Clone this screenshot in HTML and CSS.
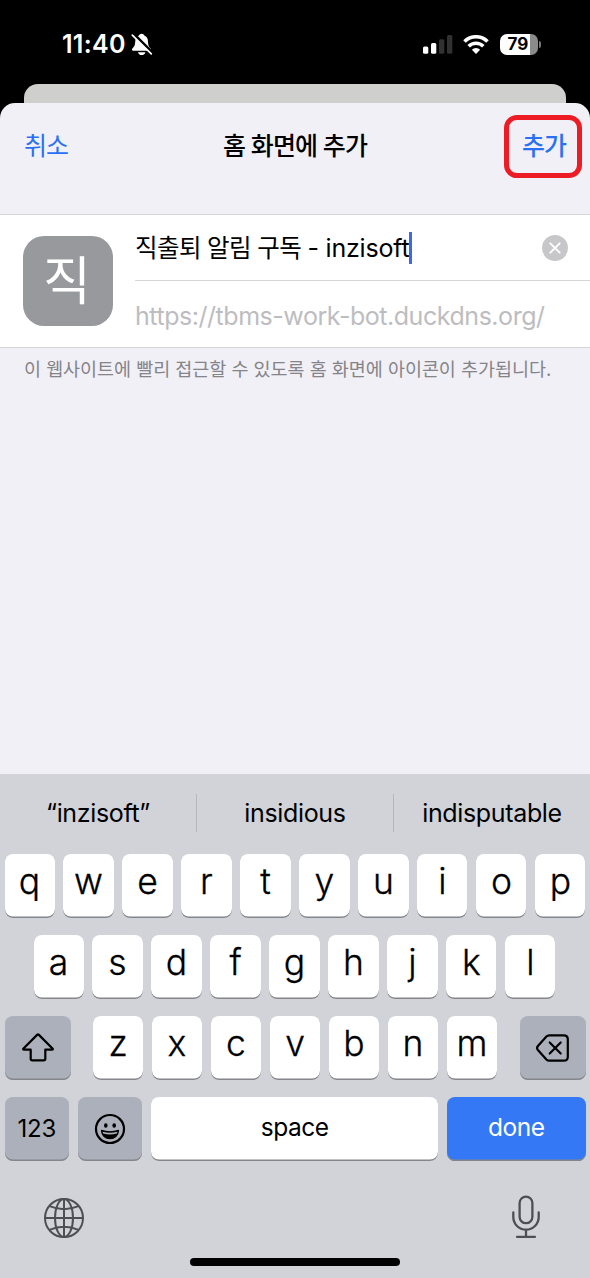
FILE: index.html
```html
<!DOCTYPE html>
<html lang="ko">
<head>
<meta charset="utf-8">
<title>홈 화면에 추가</title>
<link rel="stylesheet" href="styles.css">
</head>
<body>
<div class="phone">
  <header class="status">
    <div class="status-left">
      <span class="clock">11:40</span>
      <svg class="bell" width="22" height="24" viewBox="0 0 22 24">
        <path d="M10.700 .8C12 .8 12.900 1.500 13.300 2.600c2.600 1 3.600 3.200 3.700 6.100.1 3.500.8 4.900 2.600 6.800.9 1 .4 2.300-.9 2.300H2.300C1 17.800.5 16.500 1.400 15.500 3.300 13.500 4.100 12.100 4.200 8.700 4.300 5.800 5.500 3.600 8 2.600c.4-1.100 1.400-1.800 2.700-1.800z" fill="#fff"/>
        <path d="M7 19.200h7.400c-.4 1.700-1.800 2.900-3.700 2.900S7.400 20.900 7 19.200z" fill="#fff"/>
        <path d="M2.200 .8l18.800 18.800" stroke="#000" stroke-width="3.400"/>
        <path d="M1.300 2.100l19 18.800" stroke="#fff" stroke-width="1.700" stroke-linecap="round"/>
      </svg>
    </div>
    <div class="status-right">
      <svg width="30" height="19" viewBox="0 0 30 19">
        <rect x="0" y="11.500" width="5.300" height="7.200" rx="1.500" fill="#fff"/>
        <rect x="8" y="8" width="5.300" height="10.700" rx="1.500" fill="#fff"/>
        <rect x="16" y="4.200" width="5.300" height="14.500" rx="1.500" fill="#31322f"/>
        <rect x="24" y="0" width="5.300" height="18.700" rx="1.500" fill="#31322f"/>
      </svg>
      <svg class="wifi" width="26" height="19" viewBox="0 0 26 19" fill="none" stroke="#fff" stroke-width="3.600">
        <path d="M1.500 6.500a16.300 16.300 0 0 1 23 0"/>
        <path d="M5.700 11.200a10.400 10.400 0 0 1 14.600 0"/>
        <path d="M13 18.900L8.900 14.700a5.800 5.800 0 0 1 8.200 0z" fill="#fff" stroke="none"/>
      </svg>
      <div class="battery"><span class="battery-body">79</span><i class="battery-tip"></i></div>
    </div>
  </header>
  <div class="back-sheet"></div>
  <main class="sheet">
    <nav class="nav">
      <span class="nav-cancel">취소</span>
      <span class="nav-title">홈 화면에 추가</span>
      <span class="nav-add">추가<i class="highlight"></i></span>
    </nav>
    <section class="card">
      <div class="app-icon">직</div>
      <div class="fields">
        <div class="field name-field">
          <span class="name">직출퇴 알림 구독 <span class="latin">- inzisoft</span></span><i class="caret"></i>
          <svg class="clear" width="26" height="26" viewBox="0 0 26 26">
            <circle cx="13" cy="13" r="13" fill="#c7c7c9"/>
            <path d="M8.300 8.300l9.400 9.400M17.700 8.300l-9.400 9.400" stroke="#fff" stroke-width="1.900" stroke-linecap="round"/>
          </svg>
        </div>
        <div class="field url-field"><span class="url">https://tbms-work-bot.duckdns.org/</span></div>
      </div>
    </section>
    <p class="note">이 웹사이트에 빨리 접근할 수 있도록 홈 화면에 아이콘이 추가됩니다.</p>
  </main>
  <section class="keyboard">
    <div class="suggestions">
      <span>“inzisoft”</span><span>insidious</span><span>indisputable</span>
    </div>
    <div class="row"><b>q</b><b>w</b><b>e</b><b>r</b><b>t</b><b>y</b><b>u</b><b>i</b><b>o</b><b>p</b></div>
    <div class="row row-mid"><b>a</b><b>s</b><b>d</b><b>f</b><b>g</b><b>h</b><b>j</b><b>k</b><b>l</b></div>
    <div class="row row-spread">
      <div class="key-mod">
        <svg width="32" height="29" viewBox="0 0 32 29" fill="none" stroke="#000" stroke-width="2.200" stroke-linejoin="round">
          <path d="M15.100 1.900L1.500 15.500q-.9 1.200.5 1.200h6.700v9q0 1.600 1.600 1.600h11.400q1.600 0 1.600-1.600v-9H30q1.400 0 .5-1.200L16.900 1.900q-.9-.8-1.800 0z"/>
        </svg>
      </div>
      <div class="letters"><b>z</b><b>x</b><b>c</b><b>v</b><b>b</b><b>n</b><b>m</b></div>
      <div class="key-mod">
        <svg width="33" height="28" viewBox="0 0 33 28" fill="none" stroke="#000" stroke-width="2.200" stroke-linejoin="round" stroke-linecap="round">
          <path d="M13.300 1.300h14.500q4 0 4 4v17.400q0 4-4 4H13.300q-1.700 0-2.900-1.200L1.900 16q-1.600-2 0-4l8.500-9.500q1.200-1.200 2.900-1.200z"/>
          <path d="M13.700 8.500l11 11M24.700 8.500l-11 11"/>
        </svg>
      </div>
    </div>
    <div class="row row-bottom">
      <div class="key-mod num">123</div>
      <div class="key-mod emoji">
        <svg width="32" height="32" viewBox="0 0 32 32">
          <circle cx="16" cy="16" r="14" fill="none" stroke="#000" stroke-width="2.200"/>
          <ellipse cx="11.800" cy="12.500" rx="1.800" ry="2.200"/><ellipse cx="20.200" cy="12.500" rx="1.800" ry="2.200"/>
          <path d="M7.500 17.400q8.500 2.700 17 0c-.2 5.200-4 8.200-8.500 8.200s-8.300-3-8.500-8.200z" stroke="#000" stroke-width="1.200" stroke-linejoin="round"/>
          <path d="M8.500 18.700q7.500 2.100 15 0l-.7 1.900q-6.800 1.800-13.600 0z" fill="#abb0bb"/>
        </svg>
      </div>
      <div class="key-space">space</div>
      <div class="key-done">done</div>
    </div>
    <div class="dock">
      <svg class="globe" width="42" height="42" viewBox="0 0 42 42" fill="none" stroke="#4c4f54" stroke-width="2">
        <circle cx="21" cy="21" r="19"/>
        <ellipse cx="21" cy="21" rx="9" ry="19"/>
        <path d="M21 2v38M2 21h38M6.500 9.200q14.500 6 29 0M6.500 32.800q14.500-6 29 0"/>
      </svg>
      <svg width="30" height="44" viewBox="0 0 30 44" fill="none" stroke="#4c4f54" stroke-width="2.300" stroke-linecap="round">
        <rect x="8.600" y="1.600" width="12.800" height="26.600" rx="6.400"/>
        <path d="M2.300 17.500v4.500a12.700 12.700 0 0 0 25.400 0v-4.500M15 34.800v7M6 41.800h18"/>
      </svg>
    </div>
    <div class="home"></div>
  </section>
</div>
</body>
</html>
```
FILE: styles.css
```css
* { box-sizing: border-box; }
body { margin: 0; background: #000; }
.phone {
  width: 590px; height: 1278px; overflow: hidden;
  display: flex; flex-direction: column;
  font-family: Inter, "Noto Sans CJK KR", sans-serif;
  background: #000; color: #000;
}
i { display: block; }
svg { display: block; flex: none; }

.status {
  height: 84px; flex: none; color: #fff;
  display: flex; justify-content: space-between; align-items: flex-start;
  padding: 33px 49px 0 62px;
}
.status-left { display: flex; gap: 6px; }
.clock { font-size: 25px; line-height: 22px; font-weight: 600; width: 63px; letter-spacing: 0.3px; white-space: nowrap; }
.status-right { display: flex; align-items: center; padding-top: 1px; }
.wifi { margin-left: 10px; }
.battery { display: flex; align-items: center; margin-left: 11px; }
.battery-body {
  width: 38px; height: 21px; border-radius: 7px;
  background: linear-gradient(90deg, #fff 30px, #8b8b8b 30px);
  color: #000; font-size: 17px; font-weight: 700; line-height: 21px; text-align: center; padding-right: 2px;
}
.battery-tip { width: 2px; height: 7px; margin-left: 1px; border-radius: 0 3px 3px 0; background: #777; }

.back-sheet { flex: none; height: 19px; margin: 0 24px; border-radius: 14px 14px 0 0; background: #cfd0ce; }
.sheet { flex: none; height: 671px; background: #f1f0f6; border-radius: 15px 15px 0 0; }
.nav {
  height: 111px; padding: 25px 24px 0; font-size: 25px; line-height: 36px;
  display: grid; grid-template-columns: 1fr auto 1fr; align-items: start;
}
.nav-cancel { color: #2a70f6; letter-spacing: -1px; }
.nav-title { font-weight: 500; letter-spacing: -0.9px; }
.nav-add { position: relative; justify-self: end; color: #2a70f6; font-weight: 500; letter-spacing: -1px; }
.highlight {
  position: absolute; right: -16px; top: -13px; width: 78px; height: 63px;
  border: 5px solid #ed1c24; border-radius: 13px;
}

.card {
  height: 134px; display: flex; align-items: center; gap: 22px; padding-left: 23px;
  background: #fff; border-top: 1px solid #d6d6d8; border-bottom: 1px solid #d6d6d8;
}
.app-icon {
  width: 90px; height: 90px; border-radius: 21px; background: #98999d; color: #fff;
  font-size: 52px; font-weight: 400; line-height: 91px; text-align: center; padding-right: 2px;
}
.fields { flex: 1; height: 100%; }
.field { display: flex; align-items: center; height: 66px; }
.name-field { border-bottom: 1px solid #d6d6d8; padding-right: 22px; }
.name { font-size: 24.500px; letter-spacing: -0.600px; line-height: 36px; white-space: nowrap; padding-top: 1px; }
.latin { font-size: 25px; letter-spacing: -0.2px; }
.caret { width: 3px; height: 32px; background: #3e68e6; }
.clear { margin-left: auto; }
.url { font-size: 25px; color: #bdbdbf; letter-spacing: -0.460px; padding-top: 3px; }
.note { margin: 0; padding: 7px 24px; font-size: 18.500px; line-height: 28px; color: #858489; letter-spacing: -0.040px; white-space: nowrap; }

.keyboard { flex: 1; background: #d1d3d9; }
.suggestions { height: 79.500px; display: flex; font-size: 25px; letter-spacing: -0.350px; }
.suggestions span { flex: 1; height: 38px; margin-top: 19.500px; line-height: 38px; text-align: center; }
.suggestions span + span { border-left: 1px solid #b5b7bd; }
.row { display: flex; gap: 8.900px; height: 64px; margin-bottom: 17px; padding: 0 4.500px; }
.row-mid { padding: 0 33.500px; }
.letters { display: flex; gap: 8.900px; }
.row-spread { justify-content: space-between; }
.row b, .key-mod, .key-space, .key-done {
  height: 64px; border-radius: 8px; display: flex; align-items: center; justify-content: center;
  background: #fff; box-shadow: inset 0 -1.500px 0 #85868b;
}
.row b { width: 50.100px; flex: none; padding-bottom: 7px; font-size: 35.500px; line-height: 1; font-weight: 300; -webkit-text-stroke: 0.300px #000; }
.row .key-mod { width: 66px; background: #abb0bb; }
.row .num { width: 64.500px; font-size: 24px; letter-spacing: -0.300px; }
.row .emoji { width: 64.500px; }
.key-space { flex: 1; font-size: 24.500px; padding-bottom: 3px; letter-spacing: -0.500px; }
.key-done { width: 138.500px; font-size: 24.500px; letter-spacing: -0.500px; padding-bottom: 3px; color: #fff; }
.row .key-done { background: #3478f6; }
.dock { display: flex; justify-content: space-between; padding: 17px 49px 0 43px; height: 80.500px; align-items: flex-start; }
.globe { margin-top: 2px; }
.home { width: 210px; height: 8px; border-radius: 4px; background: #000; margin: 0 auto; }
```
